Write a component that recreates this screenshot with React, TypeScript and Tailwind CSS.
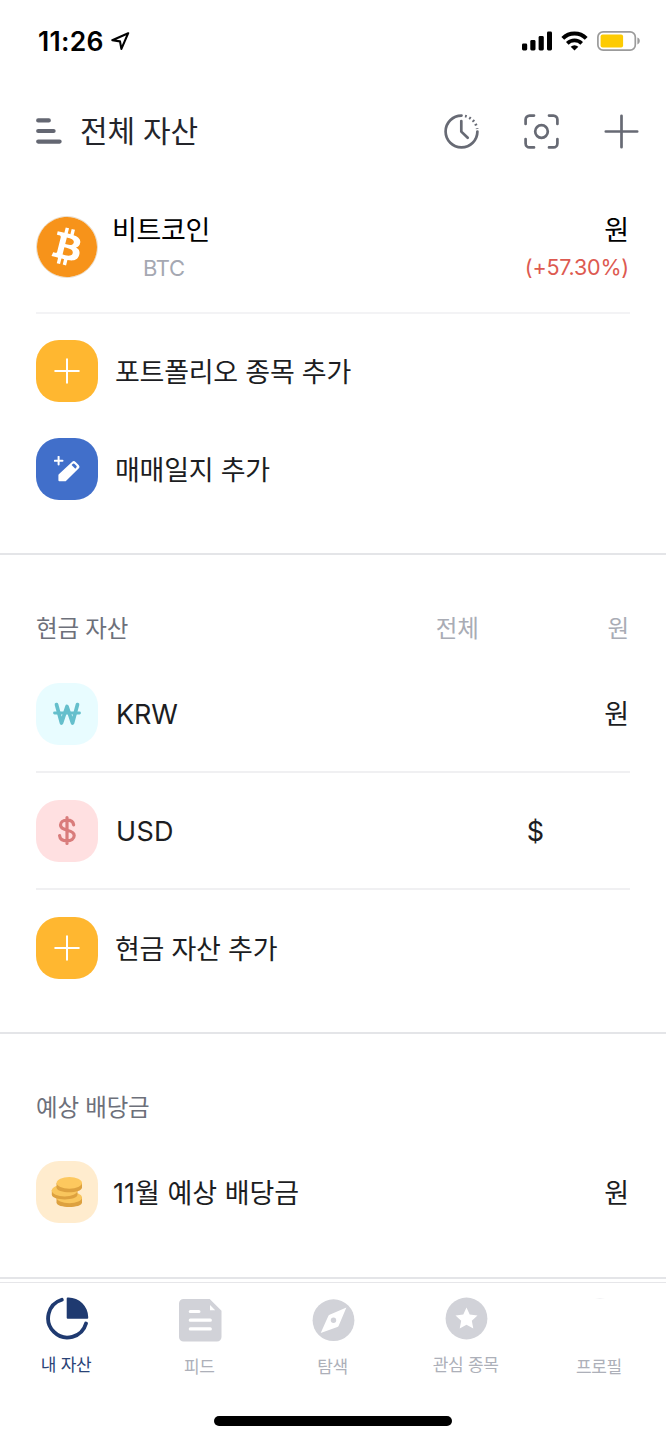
import type { ReactNode } from "react";
import { SiBitcoin } from "react-icons/si";

const FONT = "font-['Inter','Noto_Sans_CJK_KR',sans-serif]";

function StatusBar() {
  return (
    <div className="flex h-[82px] items-center justify-between pl-[38px] pr-[26px]">
      <div className="flex items-center gap-[7px]">
        <span className="w-[66px] whitespace-nowrap text-[26.5px] font-semibold leading-none tracking-[0.3px] text-black">11:26</span>
        <svg width="19" height="19" viewBox="0 0 19 19" fill="none" stroke="#000" strokeWidth="2.1" strokeLinejoin="round">
          <path d="M17.2 1.2 1.3 8.2 9 9.4 10.4 16.9Z" />
        </svg>
      </div>
      <div className="flex items-center gap-[9px]">
        <svg width="30" height="20" viewBox="0 0 30 20">
          <rect x="0" y="12.5" width="5.2" height="7" rx="1.4" />
          <rect x="8.3" y="9" width="5.2" height="10.5" rx="1.4" />
          <rect x="16.6" y="5" width="5.2" height="14.5" rx="1.4" />
          <rect x="25" y="0.6" width="5" height="18.9" rx="1.4" />
        </svg>
        <svg width="27" height="20" viewBox="0 0 27 20" fill="none" stroke="#000" strokeWidth="4">
          <path d="M1.8 7.4a16.6 16.6 0 0 1 23.4 0" />
          <path d="M6.3 12.4a10.2 10.2 0 0 1 14.4 0" strokeWidth="3.7" />
          <path d="M13.5 19.6 9.7 15.8a5.5 5.5 0 0 1 7.6 0Z" fill="#000" stroke="none" />
        </svg>
        <svg width="43" height="20" viewBox="0 0 43 20">
          <rect x="0.9" y="0.9" width="37.4" height="18.2" rx="5.2" fill="none" stroke="#9b9b9b" strokeWidth="1.7" />
          <rect x="3.6" y="3.5" width="22.5" height="13" rx="2" fill="#fdcb02" />
          <path d="M40.4 6.6c1.6.6 2.4 1.9 2.4 3.4s-.8 2.8-2.4 3.4Z" fill="#9b9b9b" />
        </svg>
      </div>
    </div>
  );
}

function Header() {
  return (
    <header className="flex h-[98px] items-center justify-between pl-9 pr-[27px]">
      <div className="flex items-center gap-[18px]">
        <svg width="26" height="26" viewBox="0 0 26 26" stroke="#646772" strokeWidth="4.2" strokeLinecap="round">
          <path d="M2.2 2.4h10.6M2.2 13h15.4M2.2 23.6h21.4" />
        </svg>
        <h1 className="text-[30px] leading-none tracking-[-0.2px] text-[#24252b]">전체 자산</h1>
      </div>
      <div className="flex items-center gap-[45px]">
        <svg width="35" height="35" viewBox="0 0 35 35" fill="none" stroke="#676a74" strokeWidth="2.7">
          <path d="M17.5 1.6A15.9 15.9 0 1 0 33.4 17.5" strokeLinecap="round" />
          <path d="M21 2A15.9 15.9 0 0 1 33.2 15" strokeDasharray="1.8 2.7" />
          <path d="M17.3 7v10.6l6.4 6.2" strokeLinecap="round" strokeLinejoin="round" />
        </svg>
        <svg width="35" height="35" viewBox="0 0 35 35" fill="none" stroke="#676a74" strokeWidth="2.7" strokeLinecap="round">
          <path d="M1.6 10V5.6a4 4 0 0 1 4-4H10M25 1.6h4.4a4 4 0 0 1 4 4V10M33.4 25v4.4a4 4 0 0 1-4 4H25M10 33.4H5.6a4 4 0 0 1-4-4V25" />
          <circle cx="17.5" cy="17.5" r="6.3" />
        </svg>
        <svg width="35" height="35" viewBox="0 0 35 35" stroke="#676a74" strokeWidth="2.7" strokeLinecap="round">
          <path d="M17.5 1.8v31.4M1.8 17.5h31.4" />
        </svg>
      </div>
    </header>
  );
}

function Tile({ className, children }: { className: string; children: ReactNode }) {
  return (
    <span className={`flex size-[62px] flex-none items-center justify-center rounded-[23px] ${className}`}>
      {children}
    </span>
  );
}

function PlusTile() {
  return (
    <Tile className="bg-[#ffb730]">
      <svg width="26" height="26" viewBox="0 0 26 26" stroke="#fff" strokeWidth="2" strokeLinecap="round">
        <path d="M13 1.2v23.6M1.2 13h23.6" />
      </svg>
    </Tile>
  );
}

function Row({
  icon,
  label,
  value,
  className,
  labelClass = "ml-[17px] pt-[2px] tracking-[-0.25px]",
}: {
  icon: ReactNode;
  label: string;
  value?: ReactNode;
  className: string;
  labelClass?: string;
}) {
  return (
    <div className={`mx-9 flex items-center text-[27px] text-[#1c1d22] ${className}`}>
      {icon}
      <span className={`flex-1 leading-none ${labelClass}`}>{label}</span>
      {value}
    </div>
  );
}

function SectionTitle({ children }: { children: ReactNode }) {
  return (
    <div className="mx-9 flex h-[60px] items-center pt-[3px] text-[23.5px] leading-none tracking-[-0.2px] text-[#6d707a]">
      {children}
    </div>
  );
}

const NAV = [
  {
    label: "내 자산",
    active: true,
    icon: (
      <>
        <path d="M16.800 2.700A19.300 19.300 0 1 0 41 26.500" fill="none" stroke="currentColor" strokeWidth="3.8" strokeLinecap="round" />
        <path d="M22.700.4h.8a20 20 0 0 1 19.700 19.700v.8a.8.8 0 0 1-.8.800H22.700a1 1 0 0 1-1-1V1.400a1 1 0 0 1 1-1Z" fill="currentColor" />
      </>
    ),
  },
  {
    label: "피드",
    low: true,
    icon: (
      <>
        <path d="M5.5 1H31.7L43.5 12.8V39a4.5 4.5 0 0 1-4.5 4.5H5.5A4.5 4.5 0 0 1 1 39V5.500A4.500 4.500 0 0 1 5.500 1Z" fill="currentColor" />
        <path d="M32 7v5.200h5.200Z" fill="#fff" />
        <path d="M12.3 13.5h8.6M12.3 22.2h20M12.3 30.9h20" stroke="#fff" strokeWidth="3.2" strokeLinecap="round" />
      </>
    ),
  },
  {
    label: "탐색",
    low: true,
    icon: (
      <>
        <circle cx="22.5" cy="22.2" r="20.9" fill="currentColor" />
        <path d="M35.4 9.6 27.8 27.4a3 3 0 0 1-1.400 1.500L9.700 35 17.200 18.200a3 3 0 0 1 1.400-1.400Z" fill="#fff" />
        <circle cx="22.5" cy="22.2" r="2.7" fill="currentColor" />
      </>
    ),
  },
  {
    label: "관심 종목",
    icon: (
      <>
        <circle cx="22.5" cy="21.5" r="20.9" fill="currentColor" />
        <path d="m22.5 10.5 3.2 7.1 7.8.9-5.7 5.3 1.5 7.7-6.8-3.8-6.800 3.800 1.500-7.700-5.700-5.300 7.800-.9Z" fill="#fff" />
      </>
    ),
  },
  {
    label: "프로필",
    low: true,
    icon: <path d="M18 0c3-.8 7-.8 10 0l-5 .8Z" fill="#eeeef0" />,
  },
];

function BottomNav() {
  return (
    <nav className="mt-[3px] flex h-[118px] border-t border-[#e6e6e9]">
      {NAV.map(({ label, icon, active, low }) => (
        <div
          key={label}
          className={`flex flex-1 flex-col items-center ${low ? "pt-[15px]" : "pt-[14px]"} ${active ? "text-[#1f3a70]" : "text-[#d1d2d8]"}`}
        >
          <svg width="45" height="45" viewBox="0 0 45 45" className="ml-px">
            {icon}
          </svg>
          <span
            className={`mr-px whitespace-nowrap text-[17px] leading-none tracking-[-0.3px] ${low ? "mt-4" : "mt-[15px]"} ${active ? "text-[#2a4377]" : "text-[#adb0b9]"}`}
          >
            {label}
          </span>
        </div>
      ))}
    </nav>
  );
}

export default function App() {
  return (
    <div className={`flex h-[1440px] w-[666px] flex-col overflow-hidden bg-white ${FONT}`}>
      <StatusBar />
      <Header />

      <section className="h-[375px] border-b-2 border-[#e4e5e8]">
        <div className="mx-9 flex h-[134px] items-center gap-[14px] border-b-2 border-[#f3f3f5] pt-[2px]">
          <span className="size-[62px] flex-none rounded-full border border-[#e8dccb] bg-white">
            <SiBitcoin className="size-full text-[#f7931a]" />
          </span>
          <div className="flex flex-1 flex-col gap-[13px] pt-[2px]">
            <span className="text-[27px] leading-none tracking-[-0.3px] text-black">비트코인</span>
            <span className="ml-[31px] text-[22px] leading-none tracking-[-0.4px] text-[#a5a8b2]">BTC</span>
          </div>
          <div className="mr-px flex flex-col items-end gap-[13px] pt-[2px]">
            <span className="text-[27px] leading-none text-black">원</span>
            <span className="text-[21.5px] leading-none tracking-[-0.2px] text-[#dd5a51]">(+57.30%)</span>
          </div>
        </div>
        <Row className="mt-2 h-[98px]" icon={<PlusTile />} label="포트폴리오 종목 추가" />
        <Row
          className="h-[98px]"
          icon={
            <Tile className="bg-[#416fca]">
              <svg width="26" height="26" viewBox="0 0 26 26">
                <path d="M4.6.8v7.8M.7 4.700h7.800" stroke="#fff" strokeWidth="2" strokeLinecap="round" />
                <path d="M4.800 18.200 18 5.900a2.600 2.600 0 0 1 3.600 0l3 3.100a2.600 2.600 0 0 1 0 3.600L11.700 25.200H5.400a1 1 0 0 1-1-1V19.200a1.500 1.500 0 0 1 .4-1Z" fill="#fff" />
                <path d="m17.600 8.900 1.300-1.100a1.200 1.200 0 0 1 1.700.1l1.800 1.900a1.200 1.200 0 0 1 0 1.700l-1.100 1.200Z" fill="#416fca" />
              </svg>
            </Tile>
          }
          label="매매일지 추가"
        />
      </section>

      <section className="h-[479px] border-b-2 border-[#e4e5e8] pt-[42px]">
        <SectionTitle>
          <span className="flex-1">현금 자산</span>
          <span className="text-[#a9acb5]">전체</span>
          <span className="ml-[129px] mr-px text-[#a9acb5]">원</span>
        </SectionTitle>
        <Row
          className="h-[116px] border-b-2 border-[#f0f0f2]"
          icon={
            <Tile className="bg-[#e8fcff]">
              <svg width="28" height="24" viewBox="0 0 28 24" fill="none" stroke="#65bfcc" strokeWidth="3.7" strokeLinecap="round" strokeLinejoin="round">
                <path d="M3.5 2.600 8.500 21 14 4.500 19.500 21 24.500 2.600" />
                <path d="M1.5 11h25" strokeWidth="2.8" />
              </svg>
            </Tile>
          }
          label="KRW"
          labelClass="ml-[18px] tracking-[-0.1px]"
          value={<span className="mr-px leading-none">원</span>}
        />
        <Row
          className="h-[117px] border-b-2 border-[#f0f0f2]"
          icon={
            <Tile className="bg-[#ffe0e1]">
              <svg width="18" height="29" viewBox="0 0 18 29" fill="none" stroke="#d97c7b" strokeWidth="3.2" strokeLinecap="round">
                <path d="M15.6 8.8C15.2 5.8 12.6 4.2 9 4.2c-3.8 0-6.5 1.9-6.5 4.9 0 3.3 3 4.3 6.7 5.1 4 .9 7 2 7 5.4 0 3.2-3 5.2-7.2 5.2-4.1 0-7.1-1.8-7.4-5.2M9 1.6v25.8" />
              </svg>
            </Tile>
          }
          label="USD"
          labelClass="ml-[18px] pt-[2px] tracking-[0.3px]"
          value={<span className="mr-[86px] pt-[2px] leading-none">$</span>}
        />
        <Row className="h-[116px]" icon={<PlusTile />} label="현금 자산 추가" />
      </section>

      <section className="h-[245px] border-b-2 border-[#e4e5e8] pt-[42px]">
        <SectionTitle>예상 배당금</SectionTitle>
        <Row
          className="h-[112px]"
          icon={
            <Tile className="bg-[#ffecce]">
              <svg width="32" height="32" viewBox="0 0 32 32">
                <path d="M5.5 21v5.5c0 6 25.5 6 25.5 0V21Z" fill="#dda13f" />
                <ellipse cx="18.3" cy="21.5" rx="12.7" ry="5.7" fill="#f9c65d" />
                <path d="M.8 14v4.500c0 6.500 25.700 6.500 25.700 0V14Z" fill="#dda13f" />
                <ellipse cx="13.6" cy="14.5" rx="12.8" ry="6" fill="#f9c65d" />
                <path d="M5.5 7v4.500c0 6.300 25.500 6.300 25.500 0V7Z" fill="#dda13f" />
                <ellipse cx="18.3" cy="6.8" rx="12.7" ry="5.9" fill="#fdc85e" />
              </svg>
            </Tile>
          }
          label="11월 예상 배당금"
          labelClass="ml-[15px] pt-[2px]"
          value={<span className="mr-px pt-[2px] leading-none">원</span>}
        />
      </section>

      <BottomNav />
      <div className="ml-[214px] mt-[16px] h-[10px] w-[238px] rounded-full bg-black" />
    </div>
  );
}
